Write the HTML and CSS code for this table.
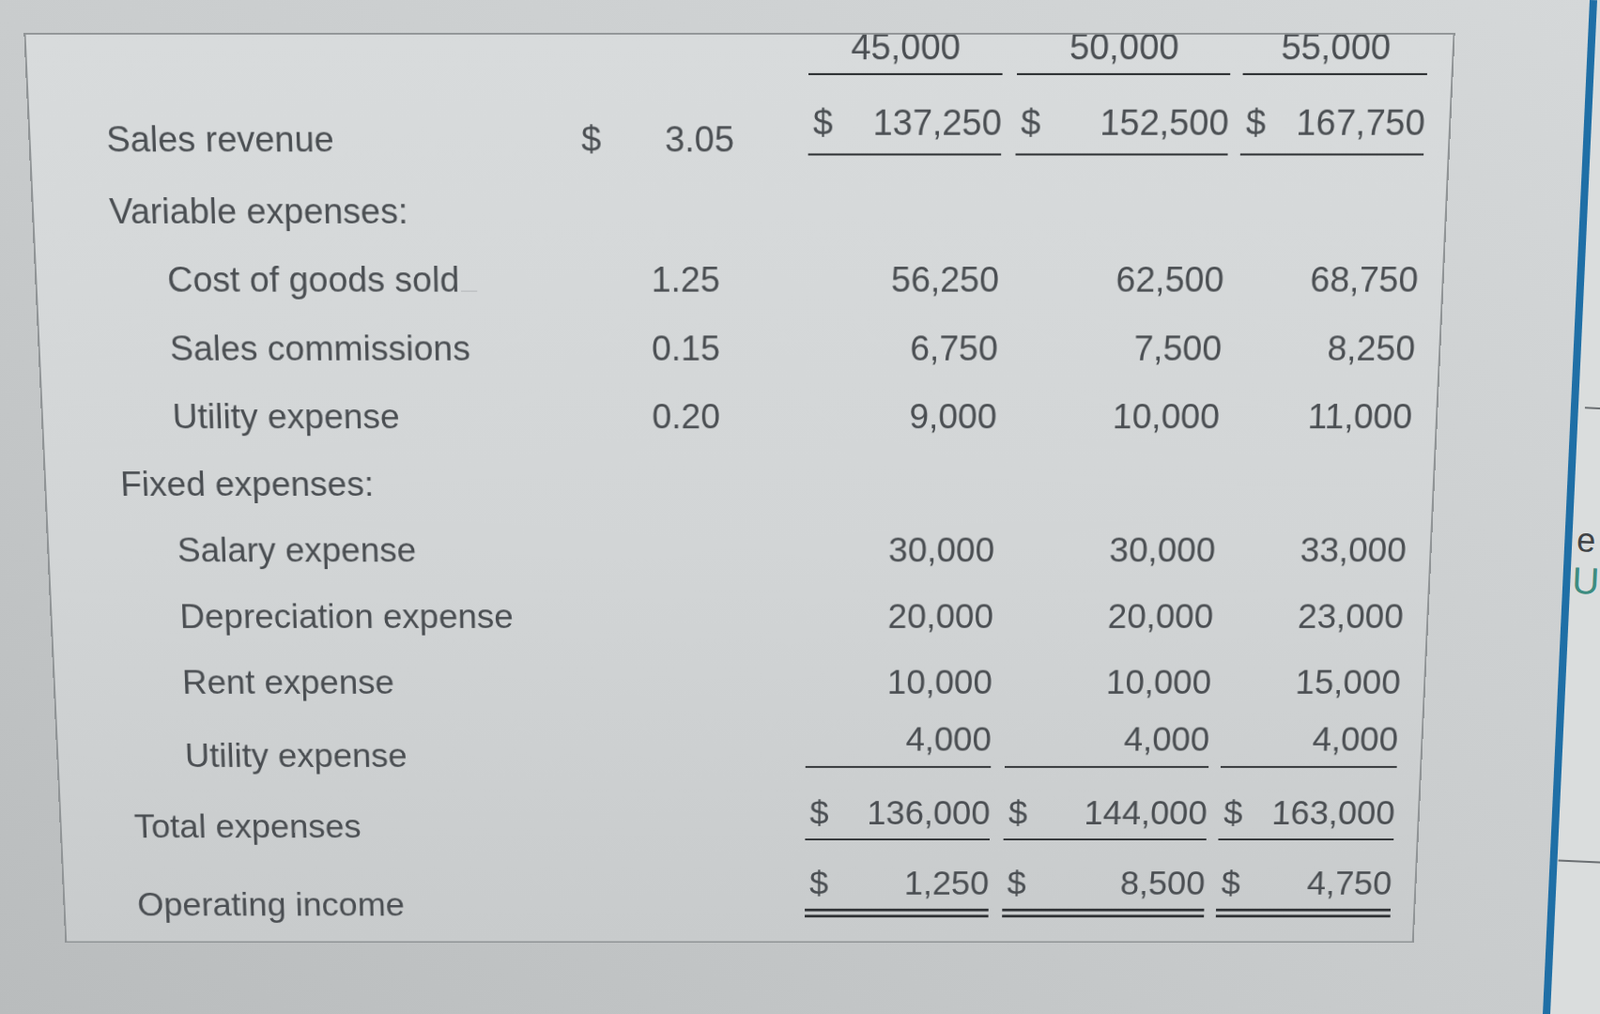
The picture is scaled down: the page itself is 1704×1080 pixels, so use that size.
FILE: index.html
```html
<!DOCTYPE html>
<html>
    <head>
        <meta charset="UTF-8">
        <meta name="viewport" content="width=device-width, initial-scale=1.0">
        <link rel="stylesheet" href="styles.css">
        <title>Contribution Statement</title>
    </head>
    <body>

        <div id="sheet">
            <div class="row head">
                <div class="label"></div>
                <div class="unit"></div>
                <div class="col c1">45,000</div>
                <div class="col c2">50,000</div>
                <div class="col c3">55,000</div>
            </div>

            <div class="row revenue">
                <div class="label">Sales revenue</div>
                <div class="unit"><span>$</span><span>3.05</span></div>
                <div class="col c1"><span>$</span><span>137,250</span></div>
                <div class="col c2"><span>$</span><span>152,500</span></div>
                <div class="col c3"><span>$</span><span>167,750</span></div>
            </div>

            <div class="row">
                <div class="label">Variable expenses:</div>
            </div>

            <div class="row">
                <div class="label sub">Cost of goods sold<span class="blank"></span></div>
                <div class="unit rate"><span>1.25</span></div>
                <div class="col c1"><span>56,250</span></div>
                <div class="col c2"><span>62,500</span></div>
                <div class="col c3"><span>68,750</span></div>
            </div>

            <div class="row">
                <div class="label sub">Sales commissions</div>
                <div class="unit rate"><span>0.15</span></div>
                <div class="col c1"><span>6,750</span></div>
                <div class="col c2"><span>7,500</span></div>
                <div class="col c3"><span>8,250</span></div>
            </div>

            <div class="row">
                <div class="label sub">Utility expense</div>
                <div class="unit rate"><span>0.20</span></div>
                <div class="col c1"><span>9,000</span></div>
                <div class="col c2"><span>10,000</span></div>
                <div class="col c3"><span>11,000</span></div>
            </div>

            <div class="row">
                <div class="label">Fixed expenses:</div>
            </div>

            <div class="row">
                <div class="label sub">Salary expense</div>
                <div class="unit"></div>
                <div class="col c1"><span>30,000</span></div>
                <div class="col c2"><span>30,000</span></div>
                <div class="col c3"><span>33,000</span></div>
            </div>

            <div class="row">
                <div class="label sub">Depreciation expense</div>
                <div class="unit"></div>
                <div class="col c1"><span>20,000</span></div>
                <div class="col c2"><span>20,000</span></div>
                <div class="col c3"><span>23,000</span></div>
            </div>

            <div class="row rent">
                <div class="label sub">Rent expense</div>
                <div class="unit"></div>
                <div class="col c1"><span>10,000</span></div>
                <div class="col c2"><span>10,000</span></div>
                <div class="col c3"><span>15,000</span></div>
            </div>

            <div class="row last-fixed">
                <div class="label sub">Utility expense</div>
                <div class="unit"></div>
                <div class="col c1"><span>4,000</span></div>
                <div class="col c2"><span>4,000</span></div>
                <div class="col c3"><span>4,000</span></div>
            </div>

            <div class="row total">
                <div class="label">Total expenses</div>
                <div class="unit"></div>
                <div class="col c1"><span>$</span><span>136,000</span></div>
                <div class="col c2"><span>$</span><span>144,000</span></div>
                <div class="col c3"><span>$</span><span>163,000</span></div>
            </div>

            <div class="row income">
                <div class="label">Operating income</div>
                <div class="unit"></div>
                <div class="col c1"><span>$</span><span>1,250</span></div>
                <div class="col c2"><span>$</span><span>8,500</span></div>
                <div class="col c3"><span>$</span><span>4,750</span></div>
            </div>
        </div>

        <div id="side">
            <div class="rule short"></div>
            <div class="letter">e</div>
            <div class="letter teal">U</div>
            <div class="rule long"></div>
        </div>

    </body>
</html>
```

FILE: styles.css
```css
html, body {
    margin: 0;
    padding: 0;
    width: 100%;
    height: 100%;
    overflow: hidden;
}

body {
    font-family: "Liberation Sans", Arial, sans-serif;
    color: #4a4e52;
    background: linear-gradient(to top right, #b9bcbd 0%, #c8cbcc 45%, #d5d8d9 100%);
}

/* the statement panel, tilted a little like the photographed screen */
#sheet {
    box-sizing: border-box;
    width: 1479px;
    height: 976px;
    margin: 46px 0 0 48px;
    padding-left: 79px;
    border: 2px solid #909496;
    background: linear-gradient(180deg, #d8dbdc 0%, #d2d5d6 55%, #c8cbcc 100%);
    overflow: hidden;
    font-size: 37px;
    line-height: 40px;
    transform: perspective(2000px) rotateX(-7deg);
}

.row {
    display: flex;
    align-items: flex-start;
    height: 71.8px;
}

.label {
    flex: none;
    width: 494px;
    box-sizing: border-box;
    white-space: nowrap;
}
.label.sub {
    padding-left: 58px;
}

.blank {
    display: inline-block;
    width: 17px;
    height: 1px;
    margin-left: 2px;
    border-bottom: 1px solid #b4b7b9;
}

.unit {
    flex: none;
    width: 159px;
    display: flex;
}
.unit span:last-child {
    margin-left: auto;
}
.unit.rate {
    padding-right: 15px;
    box-sizing: border-box;
}

.col {
    flex: none;
    box-sizing: border-box;
    display: flex;
    padding-left: 5px;
}
.col span:last-child {
    margin-left: auto;
}
.c1 {
    width: 201px;
    margin-left: 77px;
}
.c2 {
    width: 221px;
    margin-left: 15px;
}
.c3 {
    width: 191px;
    margin-left: 13px;
}

/* header with volumes, scrolled partly under the top edge */
.head {
    height: 48px;
    margin-top: -7px;
}
.head .col {
    justify-content: center;
    padding: 0 0 6px 0;
    border-bottom: 2px solid #2f3235;
}

.revenue {
    height: 119.5px;
}
.revenue .label,
.revenue .unit {
    margin-top: 46px;
}
.revenue .col {
    margin-top: 29px;
    padding-bottom: 10.5px;
    border-bottom: 2px solid #2f3235;
}

.rent {
    height: 63px;
}

.last-fixed {
    height: 81.5px;
}
.last-fixed .label {
    margin-top: 17.7px;
}
.last-fixed .col {
    padding-bottom: 9px;
    border-bottom: 2px solid #2f3235;
}

.total {
    height: 79px;
}
.total .label {
    margin-top: 15.8px;
}
.total .col {
    padding-bottom: 8.4px;
    border-bottom: 2px solid #2f3235;
}

.income .label {
    margin-top: 24.4px;
}
.income .col {
    padding-bottom: 8.5px;
    border-bottom: 10px double #2f3235;
}

/* edge of the neighbouring window on the right */
#side {
    position: absolute;
    top: 0;
    left: 1693px;
    width: 140px;
    height: 1200px;
    display: flex;
    flex-direction: column;
    border-left: 8px solid #1f6fa6;
    background: #dadddd;
    transform: rotate(2.65deg);
    transform-origin: 0 0;
}

.rule {
    height: 2px;
    background: #6b6f72;
}
.rule.short {
    width: 20px;
    margin: 433px 0 0 7px;
}
.rule.long {
    width: 60px;
    margin: 278px 0 0 1px;
}

.letter {
    margin: 120px 0 0 5px;
    font-size: 36px;
    line-height: 40px;
    color: #3f4346;
}
.letter.teal {
    margin: 3px 0 0 2px;
    font-size: 40px;
    color: #3d8c80;
}
```
